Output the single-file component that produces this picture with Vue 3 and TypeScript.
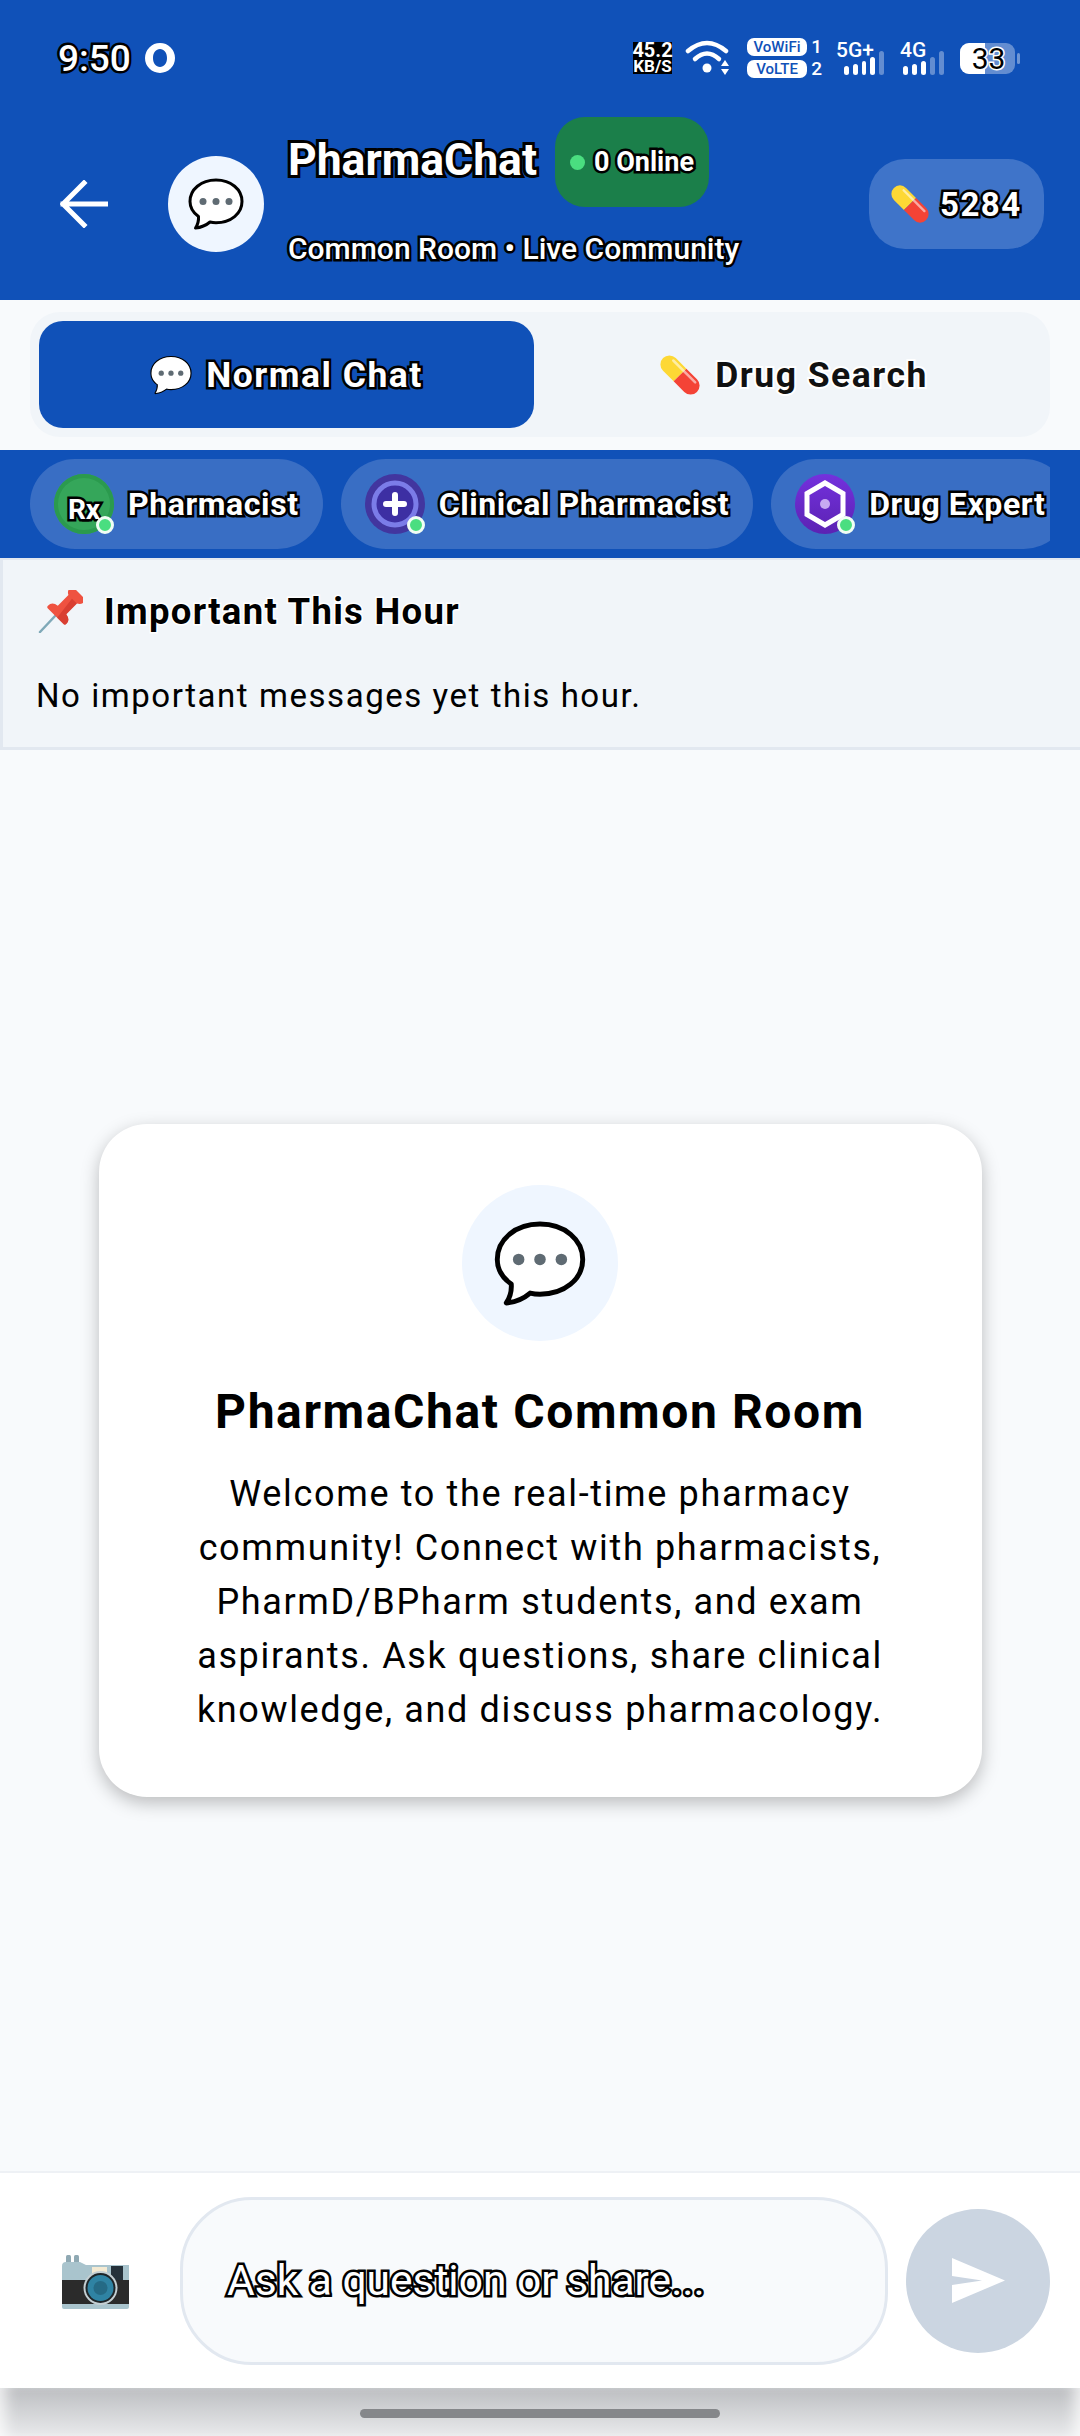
<script setup lang="ts">
interface Role {
  name: string
  kind: 'rx' | 'plus' | 'hex'
}
const roles: Role[] = [
  { name: 'Pharmacist', kind: 'rx' },
  { name: 'Clinical Pharmacist', kind: 'plus' },
  { name: 'Drug Expert', kind: 'hex' },
]
const nets = [
  { label: '5G+', cls: 'net-five', bars: [9, 11, 14, 18, 24], dim: 1 },
  { label: '4G', cls: 'net-four', bars: [9, 11, 14, 18, 24], dim: 2 },
]
</script>

<template>
  <div class="screen">
    <svg class="defs" width="0" height="0" aria-hidden="true">
      <symbol id="bubble" viewBox="0 0 56 52">
        <path d="M28 2C13 2 2 11.500 2 23.500C2 30 5.500 35 10.500 38.500C10.800 42.500 9.500 47 7.500 50C13 49.500 18.500 47 22 44C24 44.500 26 44.700 28 44.700C43 44.700 54 35.500 54 23.500C54 11.500 43 2 28 2Z" fill="#fff" stroke="#000" stroke-width="3" stroke-linejoin="round" />
        <circle cx="15" cy="23.500" r="3.500" fill="#5f6b73" />
        <circle cx="28" cy="23.500" r="3.500" fill="#5f6b73" />
        <circle cx="41" cy="23.500" r="3.500" fill="#5f6b73" />
      </symbol>
      <symbol id="capsule" viewBox="0 0 40 40">
        <g transform="rotate(45 20 20)">
          <path d="M20 11H5A9 9 0 0 0 5 29H20Z" fill="#fdd835" />
          <path d="M20 11H35A9 9 0 0 1 35 29H20Z" fill="#f44336" />
          <path d="M5 14.500H36" stroke="#fff" stroke-opacity="0.55" stroke-width="2.500" stroke-linecap="round" />
        </g>
      </symbol>
    </svg>

    <header class="top">
      <div class="status">
        <span class="time">9:50</span>
        <svg class="ring" viewBox="0 0 30 30">
          <path d="M15 0A15 15 0 1 0 15 30A15 15 0 1 0 15 0ZM15 6C19 6 22 9.500 22 15C22 20.500 19 24 15 24C11 24 8 20.500 8 15C8 9.500 11 6 15 6Z" fill="#fff" fill-rule="evenodd" />
        </svg>
        <div class="status-right">
          <div class="speed"><span>45.2</span><span class="speed-unit">KB/S</span></div>
          <svg class="wifi" viewBox="0 0 46 38">
            <path d="M3 12Q22 -4 41 12" fill="none" stroke="#fff" stroke-width="4.500" stroke-linecap="round" />
            <path d="M10 20Q22 9 34 20" fill="none" stroke="#fff" stroke-width="4.500" stroke-linecap="round" />
            <circle cx="22" cy="29" r="4.500" fill="#fff" />
            <path d="M40 21L44 27H36Z" fill="#fff" />
            <path d="M40 36L44 30H36Z" fill="#fff" />
          </svg>
          <div class="sims">
            <span class="sim-pill">VoWiFi</span><span class="sim-num">1</span>
            <span class="sim-pill">VoLTE</span><span class="sim-num">2</span>
          </div>
          <div v-for="net in nets" :key="net.label" class="net" :class="net.cls">
            <span class="net-label">{{ net.label }}</span>
            <div class="bars">
              <i
                v-for="(h, idx) in net.bars"
                :key="idx"
                class="bar"
                :class="{ dim: idx >= net.bars.length - net.dim }"
                :style="{ height: h + 'px' }"
              ></i>
            </div>
          </div>
          <div class="battery">
            <div class="battery-body"><span class="battery-level"></span><span class="battery-num">33</span></div>
            <i class="battery-tip"></i>
          </div>
        </div>
      </div>

      <div class="head">
        <svg class="back" viewBox="0 0 48 48">
          <path d="M47 24H3M24 3L3 24L24 45" fill="none" stroke="#fff" stroke-width="5" stroke-linecap="square" />
        </svg>
        <div class="avatar"><svg class="avatar-bubble"><use href="#bubble" /></svg></div>
        <div class="head-text">
          <div class="head-title">
            <h1 class="title">PharmaChat</h1>
            <div class="online"><i class="online-dot"></i><span>0 Online</span></div>
          </div>
          <p class="subtitle">Common Room • Live Community</p>
        </div>
        <div class="coins">
          <svg class="coin-icon"><use href="#capsule" /></svg>
          <span>5284</span>
        </div>
      </div>
    </header>

    <section class="tabs-wrap">
      <div class="tabs">
        <button class="tab tab-on">
          <svg class="tab-icon"><use href="#bubble" /></svg>
          <span>Normal Chat</span>
        </button>
        <button class="tab">
          <svg class="tab-icon"><use href="#capsule" /></svg>
          <span>Drug Search</span>
        </button>
      </div>
    </section>

    <section class="roles">
      <div class="roles-track">
        <div v-for="role in roles" :key="role.name" class="role">
          <div class="role-avatar" :class="'av-' + role.kind">
            <span v-if="role.kind === 'rx'" class="rx">Rx</span>
            <svg v-else-if="role.kind === 'plus'" viewBox="0 0 60 60">
              <circle cx="30" cy="30" r="21" fill="#3d2fa3" stroke="#7b7ce8" stroke-width="5" />
              <path d="M30 21V39M21 30H39" stroke="#fff" stroke-width="6" stroke-linecap="round" />
            </svg>
            <svg v-else viewBox="0 0 60 60">
              <path d="M30 9L48 19.500V40.500L30 51L12 40.500V19.500Z" fill="none" stroke="#fff" stroke-width="5" stroke-linejoin="miter" />
              <circle cx="30" cy="30" r="5" fill="#c7a9f2" />
            </svg>
            <i class="role-dot"></i>
          </div>
          <span class="role-name">{{ role.name }}</span>
        </div>
      </div>
    </section>

    <section class="important">
      <div class="important-head">
        <svg class="pin" viewBox="0 0 45 43">
          <path d="M2 42L18 25" stroke="#7fa9b8" stroke-width="2.500" stroke-linecap="round" />
          <g transform="translate(29 15) rotate(45)">
            <path d="M-13 14Q-13 8 -6 7V-8Q-10 -10 -10 -14Q-10 -17 -7 -17H7Q10 -17 10 -14Q10 -10 6 -8V7Q13 8 13 14Q13 16 11 16H-11Q-13 16 -13 14Z" fill="#ef5240" />
            <path d="M-1 -8H6V7Q13 8 13 14Q13 16 11 16H2Z" fill="#c62f26" fill-opacity="0.55" />
          </g>
        </svg>
        <h2 class="important-title">Important This Hour</h2>
      </div>
      <p class="important-text">No important messages yet this hour.</p>
    </section>

    <main class="feed">
      <div class="card">
        <div class="card-icon"><svg class="card-bubble"><use href="#bubble" /></svg></div>
        <h2 class="card-title">PharmaChat Common Room</h2>
        <p class="card-text">
          Welcome to the real-time pharmacy community! Connect with pharmacists, PharmD/BPharm students, and exam
          aspirants. Ask questions, share clinical knowledge, and discuss pharmacology.
        </p>
      </div>
    </main>

    <footer class="composer">
      <svg class="camera" viewBox="0 0 67 55">
        <rect x="4" y="1" width="5" height="9" rx="1.500" fill="#8fa9b3" />
        <rect x="12" y="1" width="5" height="9" rx="1.500" fill="#8fa9b3" />
        <path d="M0 12Q0 8 4 8H18L24 11H67V28H0Z" fill="#a9c4cd" />
        <rect x="30" y="13" width="15" height="11" fill="#f4ead2" />
        <rect x="49" y="12" width="12" height="14" fill="#25313a" />
        <rect y="26" width="67" height="24" fill="#2b2b2b" />
        <path d="M0 50H67V53Q67 55 65 55H2Q0 55 0 53Z" fill="#a9c4cd" />
        <circle cx="38.500" cy="34" r="17" fill="#c4cfd3" />
        <circle cx="38.500" cy="34" r="15" fill="#1e2528" />
        <circle cx="38.500" cy="34" r="13" fill="#2f83a3" />
        <circle cx="38.500" cy="34" r="7" fill="#256a85" />
      </svg>
      <div class="input"><span class="placeholder">Ask a question or share...</span></div>
      <button class="send">
        <svg viewBox="0 0 53 45"><path d="M0 0L53 22.500L0 45V27L30 22.500L0 18Z" fill="#fff" /></svg>
      </button>
    </footer>

    <div class="nav"><i class="home"></i></div>
  </div>
</template>

<style>
body {
  margin: 0;
}
</style>

<style scoped>
.screen {
  width: 1080px;
  height: 2436px;
  display: flex;
  flex-direction: column;
  overflow: hidden;
  background: #f8fafc;
  font-family: Roboto, "Noto Sans", sans-serif;
  color: #000;
}
.defs {
  position: absolute;
}
h1,
h2,
p {
  margin: 0;
}
button {
  border: 0;
  padding: 0;
  font: inherit;
}
.top {
  background: #1051b8;
  height: 300px;
  flex: none;
  color: #fff;
}
.status {
  height: 108px;
  box-sizing: border-box;
  padding: 8px 60px 0 58px;
  display: flex;
  align-items: center;
}
.time {
  font-size: 37px;
  font-weight: 500;
  -webkit-text-stroke: 5px #000;
  paint-order: stroke fill;
  width: 74px;
}
.ring {
  width: 30px;
  height: 30px;
  margin-left: 13px;
}
.status-right {
  margin-left: auto;
  display: flex;
  align-items: center;
}
.speed {
  width: 39px;
  display: flex;
  flex-direction: column;
  align-items: center;
  font-size: 20px;
  line-height: 16px;
  font-weight: 700;
  background: #000;
  white-space: nowrap;
}
.speed-unit {
  font-size: 17px;
}
.wifi {
  width: 46px;
  height: 38px;
  margin-left: 13px;
}
.sims {
  margin-left: 16px;
  display: grid;
  grid-template-columns: 60px 15px;
  row-gap: 4px;
  align-items: center;
}
.sim-pill {
  height: 18px;
  border-radius: 7px;
  background: #fff;
  color: #1051b8;
  font-size: 15px;
  line-height: 18px;
  font-weight: 500;
  text-align: center;
}
.sim-num {
  font-size: 19px;
  line-height: 18px;
  font-weight: 500;
  text-align: right;
}
.net {
  display: flex;
  flex-direction: column;
  margin-left: 14px;
}
.net-four {
  margin-left: 16px;
  width: 47px;
}
.net-five {
  width: 48px;
}
.net-label {
  font-size: 21px;
  line-height: 16px;
  font-weight: 500;
  white-space: nowrap;
}
.bars {
  height: 24px;
  margin-top: -7px;
  margin-left: 8px;
  display: flex;
  align-items: flex-end;
  gap: 4px;
}
.net-four .bars {
  margin-left: 3px;
}
.bar {
  width: 5px;
  border-radius: 3px;
  background: #fff;
}
.bar.dim {
  background: rgba(255, 255, 255, 0.35);
}
.battery {
  margin-left: 13px;
  display: flex;
  align-items: center;
  gap: 2px;
}
.battery-body {
  width: 55px;
  height: 31px;
  border-radius: 9px;
  background: rgba(255, 255, 255, 0.35);
  position: relative;
  display: flex;
  align-items: center;
  justify-content: center;
}
.battery-level {
  position: absolute;
  left: 0;
  top: 0;
  bottom: 0;
  width: 25px;
  border-radius: 9px 0 0 9px;
  background: #fff;
}
.battery-num {
  position: relative;
  color: #000;
  font-size: 30px;
  line-height: 31px;
  -webkit-text-stroke: 3px #fff;
  paint-order: stroke fill;
  margin-left: 2px;
}
.battery-tip {
  width: 3px;
  height: 11px;
  border-radius: 2px;
  background: rgba(255, 255, 255, 0.4);
}
.head {
  height: 192px;
  padding: 0 36px 0 60px;
  display: flex;
  align-items: center;
}
.back {
  width: 48px;
  height: 48px;
  flex: none;
}
.avatar {
  width: 96px;
  height: 96px;
  margin-left: 60px;
  border-radius: 50%;
  background: #eff6ff;
  display: flex;
  align-items: center;
  justify-content: center;
  flex: none;
}
.avatar-bubble {
  width: 56px;
  height: 52px;
}
.head-text {
  margin-left: 24px;
  align-self: flex-start;
  padding-top: 9px;
}
.head-title {
  display: flex;
  align-items: center;
  gap: 18px;
}
.title {
  font-size: 44.500px;
  font-weight: 700;
  color: #fff;
  -webkit-text-stroke: 6px #000;
  paint-order: stroke fill;
  margin-top: -4px;
}
.online {
  width: 154px;
  height: 90px;
  box-sizing: border-box;
  padding-left: 15px;
  border-radius: 30px;
  background: #1b7f4a;
  display: flex;
  align-items: center;
  gap: 9px;
  font-size: 27px;
  font-weight: 700;
  -webkit-text-stroke: 5px #000;
  paint-order: stroke fill;
  white-space: nowrap;
}
.online-dot {
  width: 15px;
  height: 15px;
  border-radius: 50%;
  background: #4ade80;
}
.subtitle {
  margin-top: 22px;
  font-size: 30px;
  line-height: 40px;
  font-weight: 500;
  -webkit-text-stroke: 5px #000;
  paint-order: stroke fill;
  white-space: nowrap;
}
.coins {
  margin-left: auto;
  width: 175px;
  height: 90px;
  box-sizing: border-box;
  padding-left: 22px;
  border-radius: 36px;
  background: #3f74c9;
  display: flex;
  align-items: center;
  gap: 11px;
  font-size: 33px;
  font-weight: 700;
  letter-spacing: 1.500px;
  -webkit-text-stroke: 5px #000;
  paint-order: stroke fill;
}
.coin-icon {
  width: 38px;
  height: 38px;
}
.tabs-wrap {
  height: 150px;
  flex: none;
  box-sizing: border-box;
  padding: 12px 30px 13px;
  background: #f8fafc;
}
.tabs {
  height: 125px;
  box-sizing: border-box;
  padding: 9px;
  border-radius: 30px;
  background: #f1f5f9;
  display: flex;
  gap: 12px;
}
.tab {
  flex: 1;
  border-radius: 24px;
  background: transparent;
  display: flex;
  align-items: center;
  justify-content: center;
  gap: 14px;
  font-size: 35.500px;
  font-weight: 700;
  letter-spacing: 1.500px;
  color: #111;
  -webkit-text-stroke: 4px #fff;
  paint-order: stroke fill;
}
.tab-on {
  background: #1051b8;
  color: #fff;
  -webkit-text-stroke: 5px #000;
}
.tab-icon {
  width: 42px;
  height: 40px;
}
.roles {
  height: 108px;
  flex: none;
  box-sizing: border-box;
  padding: 9px 30px;
  background: #1051b8;
}
.roles-track {
  display: flex;
  gap: 18px;
  overflow: hidden;
}
.role {
  height: 90px;
  flex: none;
  box-sizing: border-box;
  padding: 0 24px;
  border-radius: 45px;
  background: #396ec4;
  display: flex;
  align-items: center;
  gap: 14px;
}
.role-avatar {
  width: 60px;
  height: 60px;
  border-radius: 50%;
  position: relative;
  display: flex;
  align-items: center;
  justify-content: center;
  flex: none;
}
.role-avatar svg {
  width: 60px;
  height: 60px;
}
.av-rx {
  background: #35a65a;
  box-shadow: inset 0 0 0 4px #2b9a4e;
}
.av-plus {
  background: #42369f;
}
.av-hex {
  background: linear-gradient(#7431dd, #5b22b3);
}
.rx {
  font-size: 28px;
  font-weight: 700;
  color: #fff;
  -webkit-text-stroke: 5px #000;
  paint-order: stroke fill;
  padding-top: 10px;
}
.role-dot {
  position: absolute;
  right: 0;
  bottom: 0;
  width: 18px;
  height: 18px;
  box-sizing: border-box;
  border: 3px solid #f0fdf4;
  border-radius: 50%;
  background: #4ade80;
}
.role-name {
  font-size: 32px;
  font-weight: 700;
  letter-spacing: 0.600px;
  color: #fff;
  -webkit-text-stroke: 5px #000;
  paint-order: stroke fill;
  white-space: nowrap;
}
.important {
  height: 192px;
  flex: none;
  box-sizing: border-box;
  padding: 30px 0 0 36px;
  background: #f1f5f9;
  border-left: 3px solid #e2e8f0;
  border-top: 2px solid #e2e8f0;
  border-bottom: 3px solid #e2e8f0;
}
.important-head {
  display: flex;
  align-items: center;
  gap: 21px;
  margin-left: -1px;
}
.pin {
  width: 45px;
  height: 43px;
}
.important-title {
  font-size: 36.500px;
  font-weight: 700;
  letter-spacing: 1.300px;
  -webkit-text-stroke: 3px #fff;
  paint-order: stroke fill;
}
.important-text {
  margin-top: 43px;
  margin-left: -3px;
  font-size: 33px;
  line-height: 40px;
  letter-spacing: 1.550px;
  white-space: nowrap;
}
.feed {
  flex: 1;
  display: flex;
  align-items: center;
  justify-content: center;
}
.card {
  width: 883px;
  height: 673px;
  box-sizing: border-box;
  padding: 61px 60px 0;
  border-radius: 48px;
  background: #fff;
  box-shadow: 0 6px 18px rgba(0, 0, 0, 0.25);
  display: flex;
  flex-direction: column;
  align-items: center;
}
.card-icon {
  width: 156px;
  height: 156px;
  border-radius: 50%;
  background: #eff6ff;
  display: flex;
  align-items: center;
  justify-content: center;
}
.card-bubble {
  width: 92px;
  height: 87px;
}
.card-title {
  margin-top: 41px;
  font-size: 48px;
  line-height: 60px;
  font-weight: 700;
  letter-spacing: 1.600px;
  white-space: nowrap;
}
.card-text {
  margin-top: 25px;
  font-size: 36px;
  line-height: 54px;
  letter-spacing: 1.650px;
  text-align: center;
}
.composer {
  height: 217px;
  flex: none;
  box-sizing: border-box;
  padding: 0 30px 0 62px;
  background: #fff;
  border-top: 2px solid #eef1f5;
  display: flex;
  align-items: center;
}
.camera {
  width: 67px;
  height: 55px;
  flex: none;
  margin-top: 2px;
}
.input {
  width: 708px;
  height: 168px;
  margin-left: 51px;
  box-sizing: border-box;
  padding-left: 44px;
  border: 3px solid #e2e8f0;
  border-radius: 72px;
  background: #f8fafc;
  display: flex;
  align-items: center;
}
.placeholder {
  font-size: 42.500px;
  color: #fff;
  -webkit-text-stroke: 5px #000;
  paint-order: stroke fill;
  white-space: nowrap;
}
.send {
  width: 144px;
  height: 144px;
  margin-left: 18px;
  border-radius: 50%;
  background: #cbd5e1;
  display: flex;
  align-items: center;
  justify-content: center;
  flex: none;
}
.send svg {
  width: 53px;
  height: 45px;
}
.nav {
  height: 48px;
  flex: none;
  background: linear-gradient(#bcbec1, #e9eaec);
  box-shadow: inset 14px 0 14px -8px rgba(255, 255, 255, 0.75), inset -14px 0 14px -8px rgba(255, 255, 255, 0.75);
  display: flex;
  justify-content: center;
  padding-top: 21px;
  box-sizing: border-box;
}
.home {
  width: 360px;
  height: 9px;
  border-radius: 5px;
  background: #85878a;
}
</style>
